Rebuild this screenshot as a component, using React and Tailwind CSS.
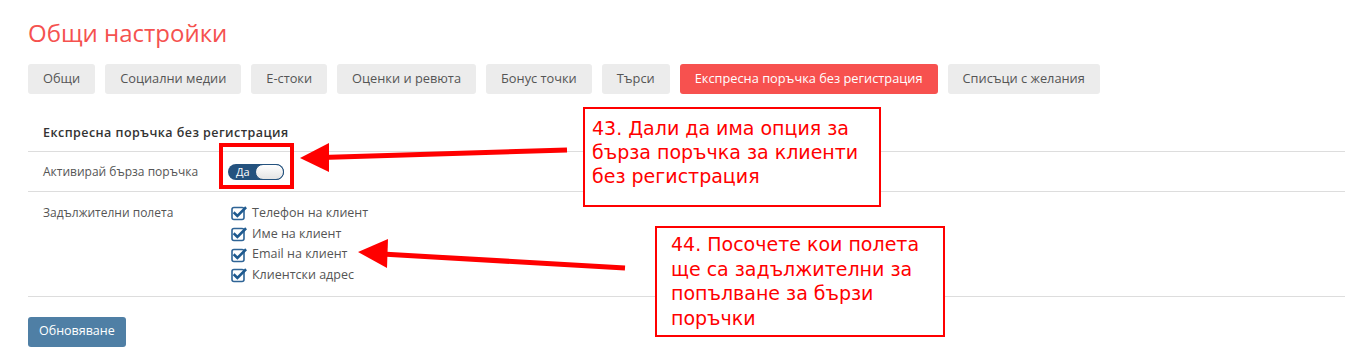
import React from "react";

const tabs = [
  "Общи",
  "Социални медии",
  "Е-стоки",
  "Оценки и ревюта",
  "Бонус точки",
  "Търси",
  "Експресна поръчка без регистрация",
  "Списъци с желания",
];

const fields = ["Телефон на клиент", "Име на клиент", "Email на клиент", "Клиентски адрес"];

function CheckIcon() {
  return (
    <svg width="16" height="16" viewBox="0 0 16 16" className="shrink-0">
      <rect x="1" y="2.5" width="12" height="12" rx="2" fill="none" stroke="#2f6496" strokeWidth="1.6" />
      <path d="M3.6 8.2 L6.4 11 L14.2 3.2" fill="none" stroke="#1f5a8f" strokeWidth="2.6" strokeLinecap="square" />
    </svg>
  );
}

export default function App() {
  const sans = { fontFamily: '"Open Sans", "Noto Sans", sans-serif' };
  return (
    <div className="relative w-[1345px] h-[361px] bg-white overflow-hidden" style={sans}>
      <div className="pl-[28px] pt-[16px]">
        <h1 className="text-[24px] leading-[34px] text-[#f5524f] font-normal">Общи настройки</h1>
        <div className="flex gap-[10px] mt-[14px]">
          {tabs.map((t, i) => (
            <div
              key={t}
              className={
                "h-[30px] px-[15px] flex items-center rounded-[3px] text-[12.8px] " +
                (i === 6 ? "bg-[#f7514f] text-white" : "bg-[#ececec] text-[#555]")
              }
            >
              {t}
            </div>
          ))}
        </div>

        <div className="mt-[21px]">
          <div className="h-[37px] pl-[15px] flex items-center text-[12.5px] font-semibold text-[#333] tracking-[0.45px] border-b border-[#ddd]">
            Експресна поръчка без регистрация
          </div>
          <div className="h-[40px] flex items-center border-b border-[#ddd] text-[12px] text-[#555]">
            <div className="pl-[15px] w-[200px]">Активирай бърза поръчка</div>
            <div className="relative w-[56px] h-[16px] rounded-full bg-[#24527e] flex items-center">
              <span className="pl-[8px] text-[11px] leading-none text-white">Да</span>
              <span className="absolute right-0 top-0 w-[29px] h-[16px] rounded-full bg-gradient-to-b from-white to-[#e4e4e4] border border-[#24527e]" />
            </div>
          </div>
          <div className="flex border-b border-[#ddd] text-[12px] text-[#555] pt-[11px] pb-[10px]">
            <div className="pl-[15px] w-[203px] leading-[20px]">Задължителни полета</div>
            <div className="flex flex-col text-[12.5px]">
              {fields.map((f) => (
                <div key={f} className="flex items-center gap-[5px] h-[20.7px]">
                  <CheckIcon />
                  <span>{f}</span>
                </div>
              ))}
            </div>
          </div>
          <button className="mt-[20px] h-[30px] px-[11px] rounded-[3px] bg-[#4f7fa5] text-white text-[12.5px]">
            Обновяване
          </button>
        </div>
      </div>

      {/* annotation: highlight around toggle */}
      <div className="absolute left-[219px] top-[143px] w-[75px] h-[46px] border-[4px] border-[#ff0000]" />

      {/* annotation arrows */}
      <svg className="absolute left-0 top-0 pointer-events-none" width="1345" height="361">
        <line x1="567" y1="150" x2="322" y2="157.5" stroke="#ff0000" strokeWidth="5" />
        <polygon points="300,158 329,143 329,172" fill="#ff0000" />
        <line x1="625" y1="268" x2="382" y2="254" stroke="#ff0000" strokeWidth="5" />
        <polygon points="358,252 388,239 387,268" fill="#ff0000" />
      </svg>

      {/* annotation boxes */}
      <div
        className="absolute left-[583px] top-[107px] w-[298px] h-[100px] border-2 border-[#ff0000] bg-white pl-[7px] pt-[7px] text-[19px] leading-[24px] text-[#ff0000]"
        style={{ fontFamily: '"DejaVu Sans", sans-serif' }}
      >
        43. Дали да има опция за
        <br />
        бърза поръчка за клиенти
        <br />
        без регистрация
      </div>
      <div
        className="absolute left-[655px] top-[226px] w-[290px] h-[111px] border-2 border-[#ff0000] bg-white pl-[14px] pt-[4px] text-[19px] leading-[24.5px] text-[#ff0000]"
        style={{ fontFamily: '"DejaVu Sans", sans-serif' }}
      >
        44. Посочете кои полета
        <br />
        ще са задължителни за
        <br />
        попълване за бързи
        <br />
        поръчки
      </div>
    </div>
  );
}
